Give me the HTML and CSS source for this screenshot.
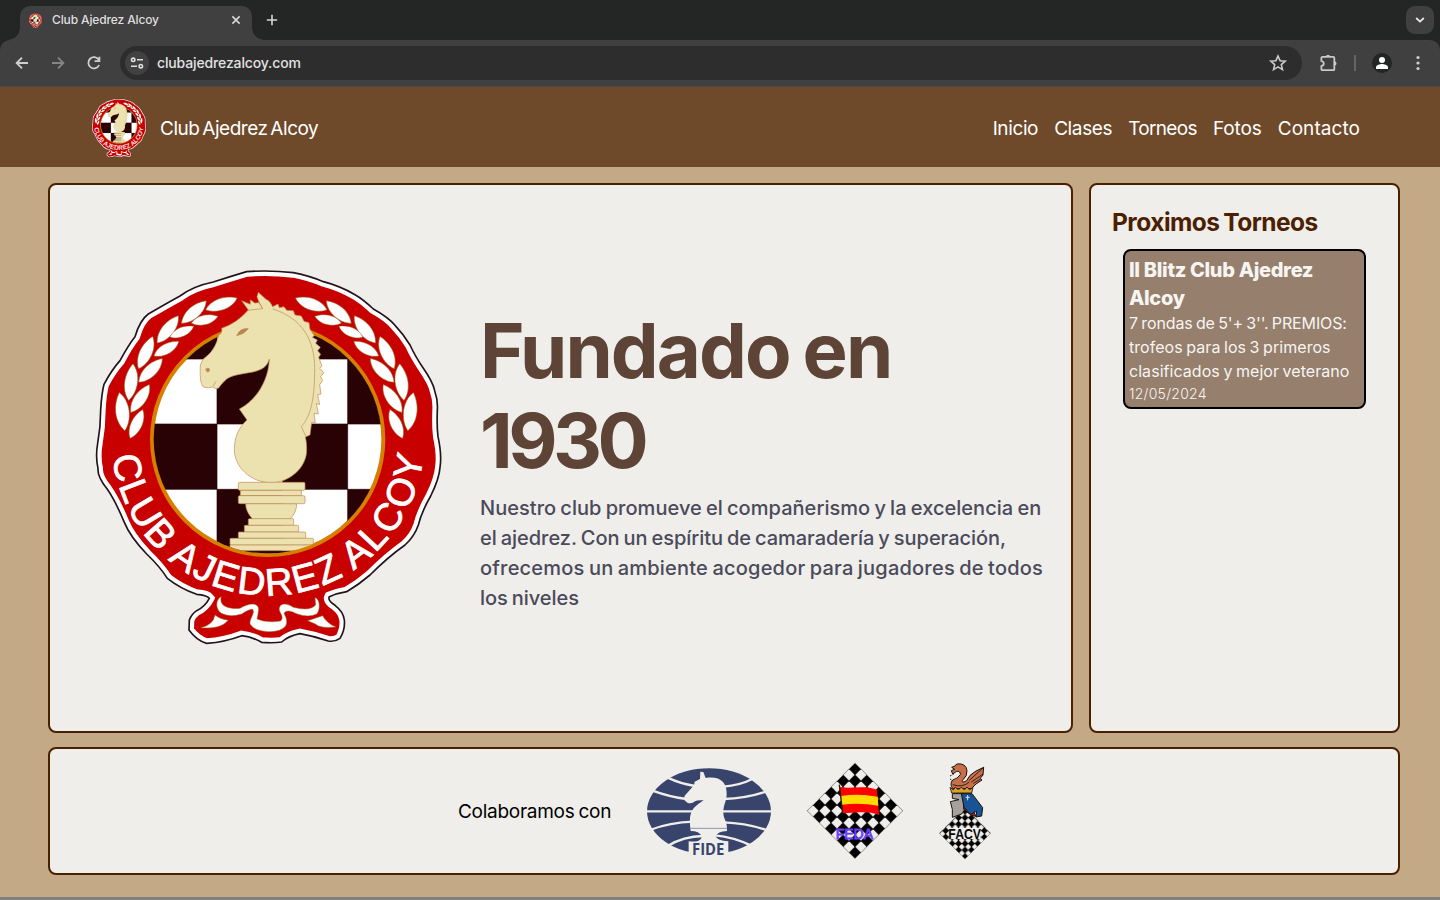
FILE: index.html
```html
<!DOCTYPE html>
<html lang="es">
<head>
<meta charset="utf-8">
<title>Club Ajedrez Alcoy</title>
<link rel="stylesheet" href="styles.css">
</head>
<body>
<svg class="defs" width="0" height="0" aria-hidden="true">
  <defs>
    <path id="edge" d="M500 35Q570 30 640 38Q690 48 730 65Q780 78 825 104Q850 118 880 147Q925 172 945 196Q970 222 990 255Q1005 288 1030 325Q1058 365 1064 392Q1074 420 1072 450Q1070 500 1074 530Q1086 585 1080 622Q1078 655 1052 708Q1025 755 1015 795Q1003 830 975 855Q925 890 870 945Q835 975 800 995Q770 1000 748 1010Q742 1022 765 1036Q790 1055 793 1080Q796 1110 780 1135Q765 1146 745 1143Q700 1128 660 1121Q625 1128 605 1146Q580 1150 545 1147Q515 1130 485 1127Q435 1146 380 1150Q350 1142 327 1110L328 1080Q335 1062 350 1052Q375 1040 388 1015Q380 1005 350 1003Q300 985 262 955Q240 920 200 882Q150 830 132 785Q105 720 80 685Q52 650 54 625Q46 590 53 550Q62 500 62 450Q65 400 72 373Q95 330 120 302Q145 255 165 230Q180 180 205 162Q260 130 300 108Q340 78 400 66Q450 50 500 35Z"/>
    <clipPath id="edgeClip"><use href="#edge"/></clipPath>
    <clipPath id="ringClip"><circle cx="563" cy="538" r="342"/></clipPath>
    <path id="leaf" d="M-50 3C-25-24 18-25 50-8C28 20-22 24-50 3Z"/>
    <path id="arc" d="M98 589A469 469 0 0 0 1031 582"/>
    <g id="branch" fill="#fff" stroke="#8f6a22" stroke-width="1.5">
      <use href="#leaf" transform="translate(425 134) rotate(-14)"/>
      <use href="#leaf" transform="translate(343 158) rotate(-36)"/>
      <use href="#leaf" transform="translate(374 181) rotate(-8) scale(.82)"/>
      <use href="#leaf" transform="translate(265 210) rotate(-46) scale(1.03)"/>
      <use href="#leaf" transform="translate(306 217) rotate(-18) scale(.78)"/>
      <use href="#leaf" transform="translate(199 279) rotate(-60) scale(1.05)"/>
      <use href="#leaf" transform="translate(260 268) rotate(-24) scale(.86)"/>
      <use href="#leaf" transform="translate(155 367) rotate(-77) scale(1.1)"/>
      <use href="#leaf" transform="translate(213 333) rotate(-39)"/>
      <use href="#leaf" transform="translate(129 455) rotate(-92) scale(1.15)"/>
      <use href="#leaf" transform="translate(182 417) rotate(-50)"/>
      <use href="#leaf" transform="translate(171 493) rotate(-60) scale(.94)"/>
    </g>
    <symbol id="crest" viewBox="39 21 1053 1140">
      <use href="#edge" fill="#c80000" stroke="#fff" stroke-width="30" clip-path="url(#edgeClip)"/>
      <use href="#edge" fill="none" stroke="#23141c" stroke-width="5"/>
      <circle cx="563" cy="538" r="347" fill="#fff" stroke="#d67f00" stroke-width="12"/>
      <g clip-path="url(#ringClip)">
        <path fill="#280204" d="M215 190H411V297H215ZM607 190H803V297H607ZM411 297H607V492H411ZM803 297H950V492H803ZM200 492H411V688H200ZM607 492H803V688H607ZM411 688H607V872H411ZM803 688H950V900H803ZM490 872H650V900H490Z"/>
        <path fill="none" stroke="#280204" stroke-width="2" d="M411 190V900M803 190V900M200 297H950M200 492H950M200 688H950"/>
      </g>
      <use href="#branch"/>
      <use href="#branch" transform="matrix(-1 0 0 1 1118 0)"/>
      <g fill="#ebe2af" stroke="#c08a58" stroke-width="2" stroke-linejoin="round">
        <path d="M425 205Q470 190 505 150L485 122L511 133V119L524 129L537 128L548 146Q535 125 531 110L535 97L557 117Q570 122 578 140L594 132L598 143L612 140L620 151L640 152L645 165L664 168L672 184L687 188L690 208L703 227L697 232L712 240L707 250L721 262L713 272L722 283L716 292L726 318L719 325L732 338L722 350L728 362L719 374L723 402L713 404L719 434L709 430L715 462L702 460L706 488L695 487L690 525L676 531Q680 545 680 570C680 625 625 668 575 668C510 668 463 620 463 568C463 530 478 500 501 480L478 447C530 420 566 360 568 297C555 350 480 330 440 357Q425 370 415 385Q407 388 397 381Q385 386 370 381C360 370 360 345 361 315Q365 298 378 290C400 275 412 245 416 225Q428 220 425 205Z"/>
        <path fill="none" d="M578 147C670 175 704 245 704 325C704 410 695 465 664 500L678 530M503 151L548 146M399 379L408 364"/>
        <path fill="#bd8450" d="M470 227Q480 203 505 206Q493 222 470 227ZM377 327Q391 320 388 333Q382 342 377 327Z"/>
        <g clip-path="url(#ringClip)">
          <path d="M497 731H650Q650 758 629 778H519Q497 756 497 731Z"/>
          <rect x="475" y="667" width="200" height="24" rx="4"/><rect x="481" y="691" width="183" height="16"/>
          <rect x="475" y="707" width="200" height="24" rx="4"/><rect x="505" y="776" width="136" height="20" rx="3"/>
          <rect x="493" y="796" width="163" height="20" rx="3"/><rect x="475" y="816" width="202" height="19" rx="3"/>
          <rect x="450" y="835" width="250" height="20" rx="3"/><rect x="450" y="855" width="250" height="17"/>
        </g>
      </g>
      <text class="crest-text"><textPath href="#arc" textLength="1370">CLUB AJEDREZ ALCOY</textPath></text>
      <g fill="#fff" stroke="#8f6a22" stroke-width="1.5">
        <path d="M424 1010C415 1040 450 1048 480 1045C505 1030 535 1025 536 1048Q534 1065 531 1077Q560 1090 602 1083C618 1065 585 1055 603 1035Q617 1027 640 1042Q690 1055 707 1035L705 1013C720 1015 722 1050 710 1062Q685 1074 650 1061Q620 1045 612 1060Q625 1082 617 1098Q603 1116 565 1115Q522 1113 510 1092C508 1075 526 1060 518 1048Q505 1048 485 1062Q450 1073 424 1060C402 1044 410 1015 424 1010Z"/>
        <path d="M405 1065Q420 1078 445 1081Q420 1110 362 1103Q400 1095 405 1065ZM728 1067Q740 1090 768 1101Q720 1106 706 1092L683 1082Z"/>
      </g>
    </symbol>
    <pattern id="chequer" x="177" y="38.5" width="36" height="36" patternUnits="userSpaceOnUse"><path d="M18-1L37 18L18 37L-1 18Z"/></pattern>
    <pattern id="chequerSmall" x="515.3" y="174" width="19.4" height="19.4" patternUnits="userSpaceOnUse"><path d="M9.7-.8L20.200 9.7L9.7 20.200L-.8 9.7Z"/></pattern>
  </defs>
</svg>

<div class="browser">
  <div class="tabs">
    <div class="tab">
      <svg class="favicon"><use href="#crest"/></svg>
      <span class="tab-title">Club Ajedrez Alcoy</span>
      <svg class="tab-close" viewBox="0 0 10 10"><path d="M1.4 1.4L8.6 8.6M8.6 1.4L1.4 8.6"/></svg>
    </div>
    <svg class="tab-new" viewBox="0 0 12 12"><path d="M6 .8V11.2M.8 6H11.2"/></svg>
    <div class="tab-search"><svg viewBox="0 0 10 6"><path d="M1.2 1L5 4.6L8.8 1"/></svg></div>
  </div>
  <div class="toolbar">
    <svg class="tool" viewBox="0 0 16 16"><path d="M14 8H2.8M8 2.6L2.6 8L8 13.4"/></svg>
    <svg class="tool tool-off" viewBox="0 0 16 16"><path d="M2 8H13.2M8 2.6L13.4 8L8 13.4"/></svg>
    <svg class="tool" viewBox="0 0 16 16"><path d="M13.1 10A5.6 5.6 0 1 1 12.7 4.800M13.400 1.800V6.200H8.600"/></svg>
    <div class="address">
      <div class="site"><svg viewBox="0 0 14 14"><circle cx="3.2" cy="3.8" r="1.7"/><circle cx="10.8" cy="10.2" r="1.7"/><path d="M7 3.8H13M1 10.2H7"/></svg></div>
      <span class="url">clubajedrezalcoy.com</span>
      <svg class="star" viewBox="0 0 18 18"><path d="M9 2L11.1 6.7L16.2 7.2L12.3 10.6L13.5 15.6L9 12.9L4.5 15.6L5.700 10.6L1.8 7.2L6.900 6.700Z"/></svg>
    </div>
    <svg class="puzzle" viewBox="0 0 20 20"><path d="M5.500 3.800H15.300Q16.300 3.800 16.300 4.800V16.200Q16.300 17.200 15.300 17.200H4.500Q3.400 17.200 3.400 16.200V13.200Q5.800 12.600 5.800 10.600T3.400 8V4.800Q3.400 3.800 4.500 3.800Z"/><path class="puzzle-knob" d="M8 3.800A2 2 0 0 1 12 3.800ZM16.300 8.200A2.200 2.200 0 0 1 16.300 12.600Z"/></svg>
    <span class="divider"></span>
    <svg class="avatar" viewBox="0 0 20 20"><circle cx="10" cy="10" r="10" fill="#222524"/><circle cx="10" cy="7" r="3" fill="#fff"/><path fill="#fff" d="M4 16V14.200C4 12 8 11 10 11S16 12 16 14.200V16Z"/></svg>
    <svg class="dots" viewBox="0 0 4 16"><circle cx="2" cy="2.500" r="1.600"/><circle cx="2" cy="8" r="1.600"/><circle cx="2" cy="13.500" r="1.600"/></svg>
  </div>
</div>

<header class="header">
  <svg class="header-logo"><use href="#crest"/></svg>
  <span class="brand">Club Ajedrez Alcoy</span>
  <nav class="nav"><a class="n1">Inicio</a><a class="n2">Clases</a><a class="n3">Torneos</a><a class="n4">Fotos</a><a class="n5">Contacto</a></nav>
</header>

<main class="page">
  <section class="card hero">
    <svg class="hero-logo"><use href="#crest"/></svg>
    <div class="hero-copy">
      <h1 class="title"><span class="t1">Fundado en</span><br><span class="t2">1930</span></h1>
      <p class="lead"><span class="l1">Nuestro club promueve el compañerismo y la excelencia en</span><br><span class="l2">el ajedrez. Con un espíritu de camaradería y superación,</span><br><span class="l3">ofrecemos un ambiente acogedor para jugadores de todos</span><br><span class="l2">los niveles</span></p>
    </div>
  </section>
  <aside class="card events">
    <h2 class="events-title">Proximos Torneos</h2>
    <article class="event">
      <h3 class="event-name"><span class="e1">II Blitz Club Ajedrez</span><br><span class="e2">Alcoy</span></h3>
      <p class="event-text"><span class="p1">7 rondas de 5'+ 3''. PREMIOS:</span><br><span class="p2">trofeos para los 3 primeros</span><br><span class="p3">clasificados y mejor veterano</span></p>
      <time class="event-date">12/05/2024</time>
    </article>
  </aside>
  <footer class="card partners">
    <span class="partners-label">Colaboramos con</span>
    <svg class="fide" viewBox="618 80 378 270">
      <ellipse cx="807" cy="213" rx="186" ry="129" fill="#39446c"/>
      <path fill="none" stroke="#efeeea" stroke-width="7" d="M683 112Q720 130 765 137M635 150Q690 170 740 176M615 213H765M630 269Q690 246 760 244M683 317Q730 288 790 287M937 116Q900 135 850 139M980 153Q920 174 850 176M845 213H1000M850 246Q920 248 982 270M825 285Q880 290 932 315"/>
      <path fill="#efeeea" d="M781 94L790 95L797 113C840 107 860 125 860 160C860 185 850 190 850 218C851 240 862 240 861 272Q832 273 827 288Q832 302 865 303V352H746V303C775 306 785 300 785 288Q778 272 752 272C748 237 748 220 762 202Q775 190 791 180Q772 178 765 183Q755 192 742 187L732 178L734 166L762 135L764 124L780 116Z"/>
      <path stroke="#8e93b4" stroke-width="3" d="M752 264H861"/>
      <text class="fide-text" x="756" y="344" textLength="97" lengthAdjust="spacingAndGlyphs">FIDE</text>
    </svg>
    <svg class="feda" viewBox="48 36 294 294">
      <path fill="#efeeea" d="M195 38.500L339 182.500L195 326.500L51 182.500Z"/>
      <path fill="url(#chequer)" stroke="#b5b5b2" stroke-width="2" d="M195 38.500L339 182.500L195 326.500L51 182.500Z"/>
      <path fill="#f00" d="M149 111C185 118 222 104 261 120L267 195C235 182 200 188 159 190Z"/>
      <path fill="#fd0" d="M153 138Q205 130 263 140L265 167Q210 158 156 164Z"/>
      <path fill="none" stroke="#242018" stroke-width="4" d="M148 104L158 191"/>
      <text class="feda-text" x="137" y="267" textLength="112" lengthAdjust="spacingAndGlyphs">FEDA</text>
    </svg>
    <svg class="facv" viewBox="444 36 162 294">
      <path fill="#efeeea" d="M525 172L603 250L525 328L447 250Z"/>
      <path fill="url(#chequerSmall)" stroke="#555" stroke-width="1" d="M525 173L602 250L525 327L448 250Z"/>
      <path fill="#efeeea" d="M477 234H572V267H477Z"/>
      <g stroke="#17120f" stroke-width="3" stroke-linejoin="round" transform="translate(438 30)">
        <path fill="#c66f48" d="M50 42L46 32L56 28L47 22L57 18L62 12Q90 8 93 32Q94 48 82 58Q74 66 84 66L92 62Q98 45 120 33L143 22L141 45L133 55L138 60L120 72L106 86H50Q40 72 50 60Q64 57 73 44Q74 33 62 34Z"/>
        <path fill="none" stroke-width="2.500" d="M143 22L100 61M141 42L106 66M134 57L112 70M50 74Q80 84 100 66"/>
        <path fill="none" stroke-dasharray="5 4" d="M42 48L53 43M42 57L50 62"/>
        <path fill="#dca12c" stroke-width="2.500" d="M42 82L52 90L58 81L67 90L76 81L85 90L93 81L101 90L111 82L107 99H47Z"/>
        <path fill="#a8a09d" d="M49 101H82L87 148L77 162L49 172V148L43 125L69 119L49 115Z"/>
        <path fill="#d20c22" d="M84 115L121 169L106 166L83 148Z"/>
        <path fill="#185394" d="M76 101H108L140 143L137 168L120 171L122 154L103 163L84 142Z"/>
      </g>
      <path fill="none" stroke="#dbe7f2" stroke-width="3" d="M533 135V151M527 142H539"/>
      <text class="facv-text" x="475" y="266" textLength="98" lengthAdjust="spacingAndGlyphs">FACV</text>
    </svg>
  </footer>
</main>
<div class="bottom-edge"></div>
</body>
</html>
```

FILE: styles.css
```css
* { box-sizing: border-box; }
body { margin: 0; width: 1440px; height: 900px; overflow: hidden; display: flex; flex-direction: column; background: #c4a986; font-family: Inter, "Open Sans", sans-serif; }
h1, h2, h3, p { margin: 0; }
svg { display: block; flex: none; overflow: visible; }
.defs { position: absolute; }
.crest-text { font: 115px "Liberation Sans", sans-serif; word-spacing: -4px; fill: #fff; stroke: #fff; stroke-width: 2.500px; }

/* browser frame */
.browser { height: 87px; flex: none; background: #242625; border-bottom: 1px solid #4b4b49; }
.tabs { height: 40px; display: flex; align-items: center; padding: 0 6px 0 20px; }
.tab { position: relative; width: 232px; height: 34px; margin-top: 6px; padding: 0 11px 6px 8px; display: flex; align-items: center; background: #404040; border-radius: 10px 10px 0 0; }
.tab::before, .tab::after { content: ""; position: absolute; bottom: 0; width: 12px; height: 12px; }
.tab::before { left: -12px; background: radial-gradient(circle at 0 0, transparent 11.500px, #404040 12px); }
.tab::after { right: -12px; background: radial-gradient(circle at 100% 0, transparent 11.500px, #404040 12px); }
.favicon { width: 15px; height: 15px; }
.tab-title { margin: 0 0 2px 9px; font: 500 12px Inter, sans-serif; letter-spacing: -.13px; color: #dfdfdf; white-space: nowrap; }
.tab-close { width: 10px; height: 10px; margin-left: auto; }
.tab-new { width: 12px; height: 12px; margin-left: 14px; }
.tab-close, .tab-new { fill: none; stroke: #d8d8d8; stroke-width: 1.600; }
.tab-search { width: 28px; height: 28px; margin-left: auto; border-radius: 9px; display: grid; place-items: center; background: #404040; }
.tab-search svg { width: 10px; height: 6px; fill: none; stroke: #e8e8e8; stroke-width: 1.800; }
.toolbar { height: 46px; display: flex; align-items: center; padding: 0 20px 0 14px; background: #404040; border-radius: 10px 10px 0 0; }
.tool { width: 16px; height: 16px; margin-right: 20px; fill: none; stroke: #cfcfcf; stroke-width: 1.800; }
.tool-off { stroke: #858585; }
.address { width: 1182px; height: 34px; margin-left: -2px; padding: 0 15px 0 5px; display: flex; align-items: center; border-radius: 17px; background: #2d2d2d; flex: none; }
.site { width: 24px; height: 24px; border-radius: 50%; display: grid; place-items: center; background: #414141; }
.site svg { width: 14px; height: 14px; fill: none; stroke: #dedede; stroke-width: 1.600; }
.url { margin: 0 0 2px 8px; font: 500 14px Inter, sans-serif; letter-spacing: -.14px; color: #e2e2e2; }
.star { width: 18px; height: 18px; margin-left: auto; fill: none; stroke: #c9c9c9; stroke-width: 1.600; }
.puzzle { width: 20px; height: 20px; margin-left: 16px; fill: none; stroke: #c9c9c9; stroke-width: 1.800; }
.puzzle-knob { fill: #c9c9c9; stroke: none; }
.divider { width: 2px; height: 16px; margin-left: 16px; background: #646464; }
.avatar { width: 20px; height: 20px; margin-left: 16px; }
.dots { width: 4px; height: 16px; margin-left: 24px; fill: #cfcfcf; }

/* site header */
.header { height: 80px; flex: none; display: flex; align-items: center; padding: 0 80px 0 91px; background: #6e4a2a; color: #fff; font-size: 19px; }
.header-logo { width: 56px; height: 60px; margin-top: 2px; }
.brand { margin: 3px 0 0 13px; letter-spacing: -.45px; word-spacing: -2.200px; white-space: nowrap; }
.nav { margin: 3px 0 0 auto; display: flex; gap: 16px; }
.n1, .n2 { letter-spacing: -.38px; }
.n3 { letter-spacing: -.66px; }
.n4 { letter-spacing: -.1px; }
.n5 { letter-spacing: .07px; }

/* content */
.page { display: grid; grid-template-columns: 1025px 311px; grid-template-rows: 550px 128px; gap: 14px 16px; padding: 16px 40px 0 48px; }
.card { background: #efeeea; border: 2px solid #4b2000; border-radius: 8px; }
.hero { display: flex; padding: 82px 0 0 43px; }
.hero-logo { width: 351px; height: 380px; }
.hero-copy { margin: 38px 0 0 36px; white-space: nowrap; }
.title { font-size: 76px; line-height: 90px; font-weight: 700; color: #5e4436; }
.t1 { letter-spacing: -1.950px; word-spacing: -3px; }
.t2 { letter-spacing: -4.600px; }
.lead { margin-top: 8px; font-size: 20px; line-height: 30px; font-weight: 500; color: #4a4a5a; word-spacing: -1.200px; }
.l1 { letter-spacing: .04px; }
.l2 { letter-spacing: -.05px; }
.l3 { letter-spacing: .21px; }
.events { padding: 19px 20px 0 21px; white-space: nowrap; }
.events-title { font-size: 24.500px; line-height: 36px; font-weight: 700; letter-spacing: -.53px; word-spacing: -1.500px; color: #4b2000; }
.event { width: 243px; height: 160px; margin: 9px 0 0 11px; padding: 5px 4px; border: 2px solid #000; border-radius: 8px; background: #967f6c; color: #f7f5f2; }
.event-name { font-size: 20px; line-height: 28px; font-weight: 800; letter-spacing: -.34px; }
.event-text { margin-top: -1px; font-size: 16px; line-height: 24px; word-spacing: -1px; }
.p1 { letter-spacing: -.13px; }
.p2, .p3 { letter-spacing: .05px; }
.event-date { display: block; margin-top: 1px; font-size: 14px; line-height: 20px; font-weight: 300; letter-spacing: .25px; }
.partners { grid-column: 1 / 3; display: flex; align-items: center; padding-left: 408px; }
.partners-label { width: 153px; margin-right: 35px; font-size: 19px; letter-spacing: -.28px; word-spacing: -1px; color: #000; white-space: nowrap; }
.fide { width: 126px; height: 90px; margin-top: 1px; }
.fide-text { font: 700 46px "Open Sans", sans-serif; fill: #39446c; }
.feda { width: 98px; height: 98px; margin-left: 34px; }
.feda-text { font: 42px "Liberation Sans", sans-serif; fill: #6a3dff; stroke: #6a3dff; stroke-width: 2.500px; }
.facv { width: 54px; height: 98px; margin-left: 34px; }
.facv-text { font: 700 45px "Liberation Sans", sans-serif; fill: #090909; }
.bottom-edge { height: 3px; flex: none; margin-top: auto; background: #808080; }
```
